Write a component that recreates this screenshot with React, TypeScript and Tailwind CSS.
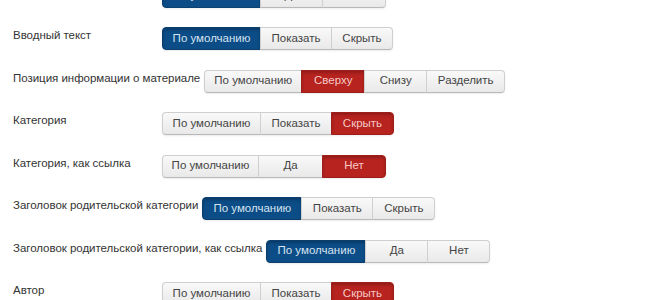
import React from "react";

type Opt = { t: string; w: number };
type Row = { label: string; opts: Opt[]; active: number; color: "blue" | "red" };

const rows: Row[] = [
  { label: "Показывать вводный текст", opts: [{ t: "По умолчанию", w: 99 }, { t: "Да", w: 62 }, { t: "Нет", w: 63 }], active: 0, color: "blue" },
  { label: "Вводный текст", opts: [{ t: "По умолчанию", w: 99 }, { t: "Показать", w: 71 }, { t: "Скрыть", w: 61 }], active: 0, color: "blue" },
  { label: "Позиция информации о материале", opts: [{ t: "По умолчанию", w: 98 }, { t: "Сверху", w: 63 }, { t: "Снизу", w: 62 }, { t: "Разделить", w: 78 }], active: 1, color: "red" },
  { label: "Категория", opts: [{ t: "По умолчанию", w: 99 }, { t: "Показать", w: 71 }, { t: "Скрыть", w: 62 }], active: 2, color: "red" },
  { label: "Категория, как ссылка", opts: [{ t: "По умолчанию", w: 97 }, { t: "Да", w: 64 }, { t: "Нет", w: 63 }], active: 2, color: "red" },
  { label: "Заголовок родительской категории", opts: [{ t: "По умолчанию", w: 100 }, { t: "Показать", w: 71 }, { t: "Скрыть", w: 62 }], active: 0, color: "blue" },
  { label: "Заголовок родительской категории, как ссылка", opts: [{ t: "По умолчанию", w: 100 }, { t: "Да", w: 62 }, { t: "Нет", w: 62 }], active: 0, color: "blue" },
  { label: "Автор", opts: [{ t: "По умолчанию", w: 99 }, { t: "Показать", w: 71 }, { t: "Скрыть", w: 62 }], active: 2, color: "red" },
];

function Btn({ o, i, n, active, color }: { o: Opt; i: number; n: number; active: boolean; color: "blue" | "red" }) {
  const first = i === 0;
  const last = i === n - 1;
  const radius = first ? "rounded-l-[4px]" : last ? "rounded-r-[4px]" : "";
  const base = "h-[23px] flex items-center justify-center text-[11.5px] leading-none border";
  let cls = "";
  if (active && color === "blue") {
    cls = "bg-[#0c4d87] border-[#0a3f70] text-[#d6e3f0] shadow-[inset_0_2px_3px_rgba(0,0,0,0.25)]";
  } else if (active && color === "red") {
    cls = "bg-[#b7231f] border-[#9e1e1a] text-[#f6c9c6] shadow-[inset_0_2px_3px_rgba(0,0,0,0.2)]";
  } else {
    cls = "bg-gradient-to-b from-[#f9f9f9] to-[#e9e9e9] border-[#cfcfcf] border-b-[#b8b8b8] text-[#444]";
  }
  return (
    <div
      className={`${base} ${cls} ${radius} ${first ? "" : "-ml-px"}`}
      style={{ width: o.w + (first ? 0 : 1) }}
    >
      {o.t}
    </div>
  );
}

export default function App() {
  return (
    <div
      className="w-[660px] h-[300px] overflow-hidden bg-white"
      style={{ fontFamily: '"Liberation Sans", Arial, sans-serif' }}
    >
      <div className="mt-[-15.5px] pl-[13px] flex flex-col gap-[19.5px]">
        {rows.map((r, ri) => (
          <div key={ri} className="flex items-start h-[23px]">
            <div className="min-w-[149px] pr-[4px] text-[11.5px] tracking-[-0.03px] leading-[17px] text-[#333] whitespace-nowrap">
              {r.label}
            </div>
            <div className="flex shadow-[0_1px_2px_rgba(0,0,0,0.08)] rounded-[4px]">
              {r.opts.map((o, i) => (
                <Btn key={i} o={o} i={i} n={r.opts.length} active={i === r.active} color={r.color} />
              ))}
            </div>
          </div>
        ))}
      </div>
    </div>
  );
}
